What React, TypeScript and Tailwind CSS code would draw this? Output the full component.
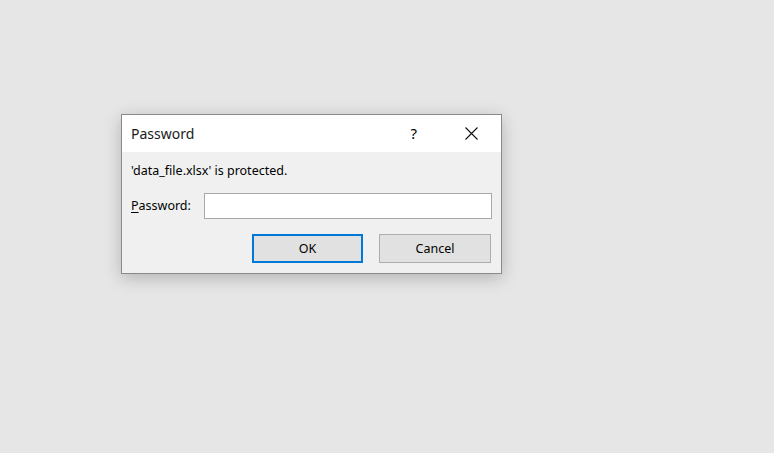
export default function App() {
  return (
    <div className="flex h-[453px] w-[774px] bg-[#e6e6e6] pl-[121px] pt-[114px] font-['Noto_Sans',sans-serif] text-black">
      <div className="flex h-[160px] w-[381px] flex-col border border-[#8a8a8a] bg-[#f0f0f0] shadow-[0_4px_16px_rgba(0,0,0,0.22)]">
        <div className="flex h-[37px] items-center bg-white pl-[9px]">
          <span className="text-[14px] text-[#1a1a1a]">Password</span>
          <span className="ml-auto mr-[48px] text-[15px] leading-none">?</span>
          <svg width="13" height="13" viewBox="0 0 13 13" className="mr-[23px]">
            <path d="M0.5 0.5 L12.5 12.5 M12.5 0.5 L0.5 12.5" stroke="#111" strokeWidth="1.1" />
          </svg>
        </div>
        <div className="flex flex-1 flex-col px-[9px]">
          <p className="mt-[10px] text-[12.5px] leading-[17px]">'data_file.xlsx' is protected.</p>
          <div className="mt-[14px] flex items-center">
            <span className="w-[73px] pt-px text-[12.5px]">
              <span className="underline underline-offset-2">P</span>assword:
            </span>
            <input type="text" className="h-[26px] w-[288px] border border-[#a9a9a9] bg-white outline-none" />
          </div>
          <div className="mt-[15px] flex justify-end gap-[16px] pr-px">
            <button type="button" className="h-[29px] w-[111px] border-2 border-[#0078d7] bg-[#e1e1e1] pt-[2px] text-[12.5px]">
              OK
            </button>
            <button type="button" className="h-[29px] w-[112px] border border-[#adadad] bg-[#e1e1e1] pt-[2px] text-[12.5px]">
              Cancel
            </button>
          </div>
        </div>
      </div>
    </div>
  );
}
